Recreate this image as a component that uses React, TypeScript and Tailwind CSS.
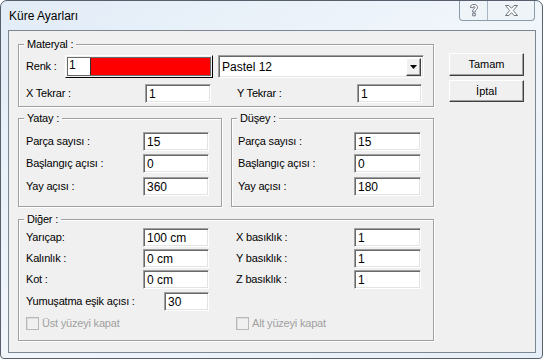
import React from "react";

const ui = { fontFamily: '"Liberation Sans", Arial, sans-serif' };

function Box({ value, w, h = 19 }: { value: string; w: number; h?: number }) {
  return (
    <div
      className="bg-white border border-t-[#a0a0a0] border-l-[#a0a0a0] border-r-white border-b-white shadow-[inset_1px_1px_0_#696969,inset_-1px_-1px_0_#e3e3e3] pl-[3px] pt-[2px] text-[12px] leading-[14px] text-black"
      style={{ width: w, height: h }}
    >
      {value}
    </div>
  );
}

function Row({
  label,
  labelW,
  value,
  w,
  className = "",
}: {
  label: string;
  labelW: number;
  value: string;
  w: number;
  className?: string;
}) {
  return (
    <div className={"flex items-center " + className}>
      <span
        className="shrink-0 text-[11px] leading-[13px] tracking-[-0.2px]"
        style={{ width: labelW }}
      >
        {label}
      </span>
      <Box value={value} w={w} />
    </div>
  );
}

function Group({
  title,
  className,
  children,
}: {
  title: string;
  className: string;
  children: React.ReactNode;
}) {
  return (
    <div
      className={
        "relative border border-[#a0a0a0] shadow-[1px_1px_0_#ffffff,inset_1px_1px_0_#ffffff] " +
        className
      }
    >
      <span className="absolute left-[5px] -top-[7px] px-[3px] bg-[#f0f0f0] text-[11px] leading-[13px] tracking-[-0.2px]">
        {title}
      </span>
      {children}
    </div>
  );
}

function Check({ label }: { label: string }) {
  return (
    <div className="flex items-center gap-[3px] text-[11px] leading-[13px] tracking-[-0.2px] text-[#a0a0a0]">
      <span className="w-[13px] h-[13px] border border-[#b8b8b8] bg-[#f0f0f0] shadow-[inset_1px_1px_0_#dcdcdc]" />
      <span>{label}</span>
    </div>
  );
}

function Button({ label, className = "" }: { label: string; className?: string }) {
  return (
    <div
      className={
        "w-[75px] flex items-center justify-center border border-t-white border-l-white border-r-[#404040] border-b-[#404040] shadow-[inset_-1px_-1px_0_#a0a0a0] bg-[#f0f0f0] text-[11px] " +
        className
      }
    >
      {label}
    </div>
  );
}

function CaptionGlyph({ kind }: { kind: "help" | "close" }) {
  if (kind === "help") {
    return (
      <svg width="10" height="13" viewBox="0 0 10 13">
        <path
          d="M1.5 3.5 C1.5 1 3 0.5 5 0.5 C7.5 0.5 8.5 1.8 8.5 3.5 C8.5 5.5 6.3 5.8 6.3 7.5 L6.3 8 L3.7 8 L3.7 7 C3.7 5 6 4.8 6 3.6 C6 2.9 5.6 2.6 5 2.6 C4.3 2.6 4 3 4 3.8 Z M3.7 9.3 L6.3 9.3 L6.3 11.8 L3.7 11.8 Z"
          fill="#ffffff"
          stroke="#6d7680"
          strokeWidth="1"
        />
      </svg>
    );
  }
  return (
    <svg width="13" height="11" viewBox="0 0 13 11">
      <path
        d="M0.5 0.5 L4 0.5 L6.5 3.3 L9 0.5 L12.5 0.5 L8.3 5.5 L12.5 10.5 L9 10.5 L6.5 7.7 L4 10.5 L0.5 10.5 L4.7 5.5 Z"
        fill="#ffffff"
        stroke="#6d7680"
        strokeWidth="1"
      />
    </svg>
  );
}

export default function App() {
  return (
    <div
      className="w-[543px] h-[359px] rounded-t-[7px] rounded-b-[4px] border border-[#55606c] bg-gradient-to-br from-[#e2ecf7] via-[#f1f6fb] to-[#e6eef7] text-black"
      style={ui}
    >
      {/* title bar */}
      <div className="h-[29px] flex items-start">
        <span className="pl-[8px] pt-[8px] text-[12px] leading-[15px] text-black">
          Küre Ayarları
        </span>
        <div className="ml-auto mr-[7px] flex h-[20px] border border-t-0 border-[#8d9aa8] rounded-b-[4px] bg-[#eef3f8]/60">
          <div className="w-[28px] flex items-center justify-center border-r border-[#a9b5c2]">
            <CaptionGlyph kind="help" />
          </div>
          <div className="w-[46px] flex items-center justify-center">
            <CaptionGlyph kind="close" />
          </div>
        </div>
      </div>

      {/* client area */}
      <div className="ml-[7px] w-[528px] h-[323px] border border-[#7d8793] bg-[#f0f0f0] flex pl-[9px] pt-[13px]">
        <div className="w-[416px] flex flex-col">
          <Group title="Materyal :" className="h-[63px] pl-[7px] pt-[10px]">
            <div className="flex items-center h-[23px]">
              <span className="w-[39px] text-[11px] leading-[13px] tracking-[-0.2px]">Renk :</span>
              <div className="w-[148px] h-[23px] border border-t-white border-l-white border-r-black border-b-black p-[1px]">
                <div className="flex h-full border border-[#696969]">
                  <div className="w-[22px] bg-white pl-[1px] text-[12px] leading-[15px]">1</div>
                  <div className="flex-1 bg-[#ff0000] border-l border-[#303030]" />
                </div>
              </div>
              <div className="ml-[5px] w-[206px] h-[23px] flex items-center bg-white border border-t-[#a0a0a0] border-l-[#a0a0a0] border-r-white border-b-white shadow-[inset_1px_1px_0_#696969,inset_-1px_-1px_0_#e3e3e3] pl-[3px] pr-[2px]">
                <span className="flex-1 text-[12px]">Pastel 12</span>
                <div className="w-[15px] h-[18px] flex items-center justify-center bg-[#f0f0f0] border border-t-white border-l-white border-r-[#404040] border-b-[#404040] shadow-[inset_-1px_-1px_0_#a0a0a0]">
                  <svg width="7" height="4" viewBox="0 0 7 4">
                    <path d="M0 0 L7 0 L3.5 4 Z" fill="#000" />
                  </svg>
                </div>
              </div>
            </div>
            <div className="flex items-center mt-[6px]">
              <Row label="X Tekrar :" labelW={119} value="1" w={66} />
              <Row label="Y Tekrar :" labelW={120} value="1" w={65} className="ml-[26px]" />
            </div>
          </Group>

          <div className="flex mt-[11px] gap-[9px]">
            <Group title="Yatay :" className="w-[204px] h-[89px] pl-[7px] pt-[13px]">
              <Row label="Parça sayısı :" labelW={117} value="15" w={66} />
              <Row label="Başlangıç açısı :" labelW={117} value="0" w={66} className="mt-[3px]" />
              <Row label="Yay açısı :" labelW={117} value="360" w={66} className="mt-[4px]" />
            </Group>
            <Group title="Düşey :" className="w-[203px] h-[89px] pl-[6px] pt-[13px]">
              <Row label="Parça sayısı :" labelW={116} value="15" w={67} />
              <Row label="Başlangıç açısı :" labelW={116} value="0" w={67} className="mt-[3px]" />
              <Row label="Yay açısı :" labelW={116} value="180" w={67} className="mt-[4px]" />
            </Group>
          </div>

          <Group title="Diğer :" className="mt-[12px] h-[122px] pl-[7px] pt-[8px]">
            <div className="flex">
              <Row label="Yarıçap:" labelW={117} value="100 cm" w={66} />
              <Row label="X basıklık :" labelW={118} value="1" w={67} className="ml-[27px]" />
            </div>
            <div className="flex mt-[2px]">
              <Row label="Kalınlık :" labelW={117} value="0 cm" w={66} />
              <Row label="Y basıklık :" labelW={118} value="1" w={67} className="ml-[27px]" />
            </div>
            <div className="flex mt-[2px]">
              <Row label="Kot :" labelW={117} value="0 cm" w={66} />
              <Row label="Z basıklık :" labelW={118} value="1" w={67} className="ml-[27px]" />
            </div>
            <Row label="Yumuşatma eşik açısı :" labelW={138} value="30" w={45} className="mt-[3px]" />
            <div className="flex mt-[6px]">
              <div className="w-[210px]">
                <Check label="Üst yüzeyi kapat" />
              </div>
              <Check label="Alt yüzeyi kapat" />
            </div>
          </Group>
        </div>

        <div className="ml-[15px] mt-[9px] flex flex-col">
          <Button label="Tamam" className="h-[23px]" />
          <Button label="İptal" className="h-[22px] mt-[4px]" />
        </div>
      </div>
    </div>
  );
}
